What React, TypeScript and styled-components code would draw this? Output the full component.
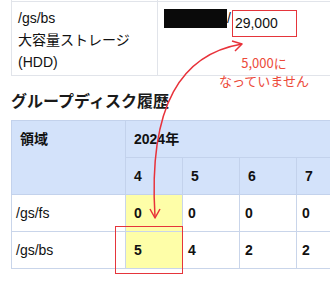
import * as React from 'react';
import styled, { createGlobalStyle } from 'styled-components';

const GlobalStyle = createGlobalStyle`
  html, body {
    margin: 0;
    padding: 0;
    overflow: hidden;
    background: #fff;
  }
  body {
    font-family: 'Liberation Sans', 'Noto Sans CJK JP', sans-serif;
    color: #111;
  }
`;

const months = ['4', '5', '6', '7'];
const usage = [
  { area: '/gs/fs', values: ['0', '0', '0', '0'] },
  { area: '/gs/bs', values: ['5', '4', '2', '2'] },
];

export default function App() {
  return (
    <>
      <GlobalStyle />
      <Page>
        <SpecTable>
          <colgroup>
            <Col $w={146} />
            <Col />
          </colgroup>
          <tbody>
            <GhostRow>
              <td />
              <td />
            </GhostRow>
            <tr>
              <SpecCell>
                /gs/bs
                <br />
                大容量ストレージ
                <br />
                (HDD)
              </SpecCell>
              <SpecCell>
                <Redacted />/<Marked>29,000</Marked>
              </SpecCell>
            </tr>
          </tbody>
        </SpecTable>

        <Heading>グループディスク履歴</Heading>

        <HistoryTable>
          <colgroup>
            <Col $w={114} />
            {months.map((m) => (
              <Col key={m} $w={57} />
            ))}
          </colgroup>
          <thead>
            <tr>
              <Head rowSpan={2}>領域</Head>
              <Head colSpan={months.length}>2024年</Head>
            </tr>
            <tr>
              {months.map((m) => (
                <Head key={m}>{m}</Head>
              ))}
            </tr>
          </thead>
          <tbody>
            {usage.map((row) => (
              <tr key={row.area}>
                <AreaCell>{row.area}</AreaCell>
                {row.values.map((v, i) => (
                  <ValueCell key={i} $current={i === 0}>
                    {v}
                  </ValueCell>
                ))}
              </tr>
            ))}
          </tbody>
        </HistoryTable>

        {/* red review annotations drawn over the page */}
        <Note>
          5,000に
          <br />
          なっていません
        </Note>
        <CellMark />
        <Arrow width="330" height="291" viewBox="0 0 330 291">
          <path
            d="M 242 44 C 182 54, 148 104, 155 217"
            fill="none"
            stroke="#e8323a"
            strokeWidth="1.5"
          />
          <path
            d="M 232 41 L 242 44 L 235 51"
            fill="none"
            stroke="#e8323a"
            strokeWidth="1.5"
            strokeLinejoin="round"
          />
          <path
            d="M 150 209 L 155 218 L 160 209"
            fill="none"
            stroke="#e8323a"
            strokeWidth="1.5"
            strokeLinejoin="round"
          />
        </Arrow>
      </Page>
    </>
  );
}

const Page = styled.div`
  position: relative;
  width: 330px;
  height: 291px;
  overflow: hidden;
  padding-left: 11px;
  box-sizing: border-box;
`;

const Col = styled.col<{ $w?: number }>`
  width: ${(p) => (p.$w ? `${p.$w}px` : 'auto')};
`;

const SpecTable = styled.table`
  width: 360px;
  border-collapse: collapse;
  table-layout: fixed;
  font-size: 14px;
  line-height: 22px;
`;

const GhostRow = styled.tr`
  td {
    height: 1px;
    padding: 0;
    border: 1px solid #e1e4ea;
    border-top: none;
  }
`;

const SpecCell = styled.td`
  vertical-align: top;
  padding: 5px 5px 2px 6px;
  border: 1px solid #e1e4ea;
  white-space: nowrap;
`;

const Redacted = styled.span`
  display: inline-block;
  width: 63px;
  height: 19px;
  background: #0a0a0a;
  vertical-align: -5px;
`;

const Marked = styled.span`
  display: inline-block;
  line-height: 21px;
  margin-left: 1px;
  padding: 2px 18px 2px 2px;
  border: 1.5px solid #e5353b;
  vertical-align: -5px;
`;

const Heading = styled.h3`
  margin: 12px 0 8px;
  font-family: 'Noto Sans CJK JP', sans-serif;
  font-size: 16px;
  font-weight: 600;
  line-height: 24px;
  color: #1a1a1a;
`;

const HistoryTable = styled.table`
  width: 342px;
  border-collapse: collapse;
  table-layout: fixed;
  font-size: 14px;
  line-height: 22px;
`;

const Head = styled.th`
  text-align: left;
  vertical-align: top;
  padding: 7px 8px;
  background: #d3e2fa;
  border: 1px solid #c3d2ec;
  font-weight: bold;
`;

const AreaCell = styled.td`
  padding: 7px 4px;
  border: 1px solid #c9d5ea;
`;

const ValueCell = styled.td<{ $current: boolean }>`
  padding: 7px ${(p) => (p.$current ? '8px' : '5px')};
  border: 1px solid #c9d5ea;
  font-weight: bold;
  background: ${(p) => (p.$current ? '#fefea8' : 'transparent')};
`;

const Note = styled.div`
  position: absolute;
  left: 206px;
  top: 54px;
  width: 116px;
  text-align: center;
  font-family: 'Noto Sans CJK JP', sans-serif;
  font-size: 13px;
  line-height: 18px;
  color: #ec4a3a;
`;

const CellMark = styled.div`
  position: absolute;
  left: 115px;
  top: 226px;
  width: 66px;
  height: 46px;
  border: 1.5px solid #e5353b;
`;

const Arrow = styled.svg`
  position: absolute;
  left: 0;
  top: 0;
  pointer-events: none;
`;
